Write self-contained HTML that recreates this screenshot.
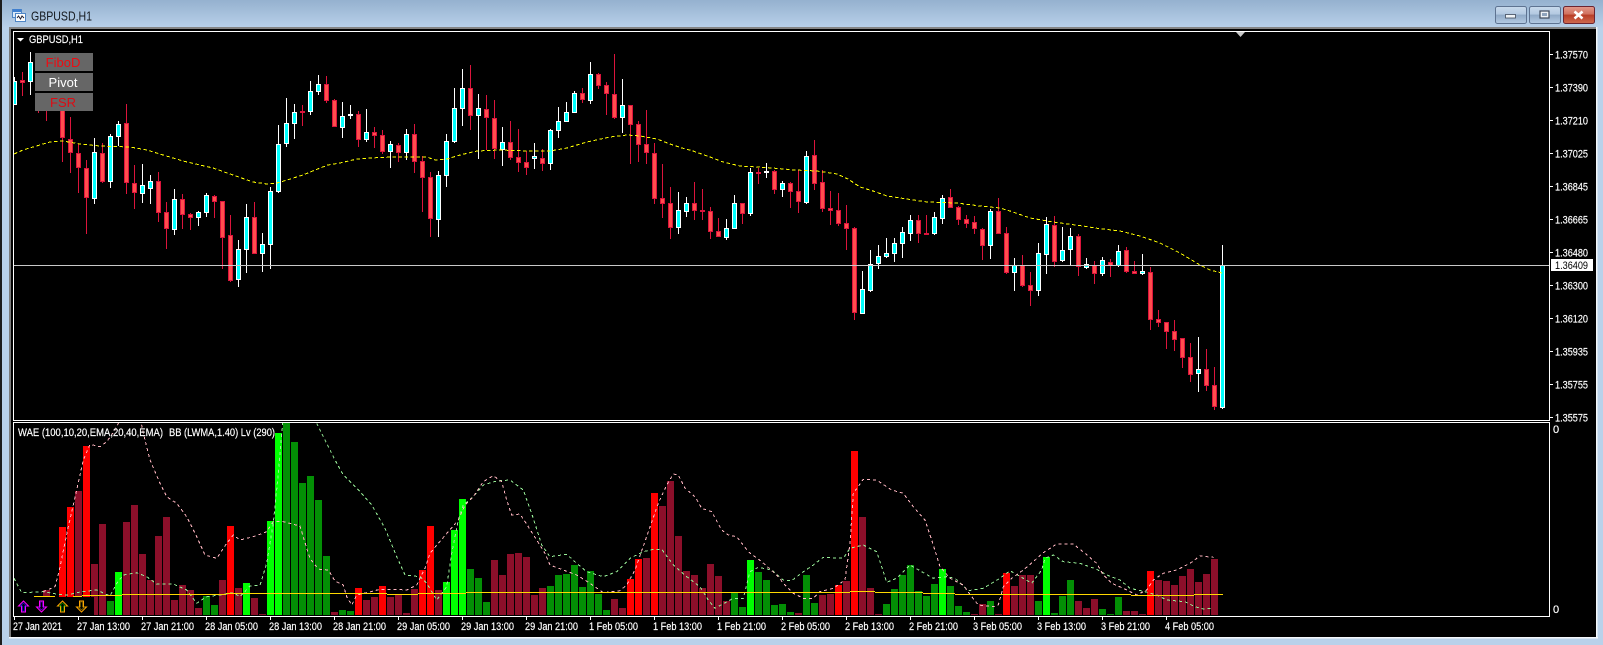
<!DOCTYPE html>
<html><head><meta charset="utf-8"><title>GBPUSD,H1</title>
<style>
html,body{margin:0;padding:0;background:#b9d1ea;width:1603px;height:645px;overflow:hidden}
svg{display:block;position:absolute;left:0;top:0}
text{font-family:"Liberation Sans",sans-serif;font-size:11px;fill:#fff}
.ax text{stroke:#fff;stroke-width:.18}
</style></head><body>
<svg id="s" width="1603" height="645" viewBox="0 0 1603 645" xmlns="http://www.w3.org/2000/svg">
<defs>
<linearGradient id="tb" x1="0" y1="0" x2="0" y2="1"><stop offset="0" stop-color="#95b1cf"/><stop offset="1" stop-color="#b9d1ea"/></linearGradient>
<linearGradient id="bb" x1="0" y1="0" x2="0" y2="1"><stop offset="0" stop-color="#c9daed"/><stop offset=".45" stop-color="#b3c9e1"/><stop offset=".5" stop-color="#8fa9c7"/><stop offset="1" stop-color="#b5cbe3"/></linearGradient>
<linearGradient id="bc" x1="0" y1="0" x2="0" y2="1"><stop offset="0" stop-color="#e39a8c"/><stop offset=".45" stop-color="#d0705e"/><stop offset=".5" stop-color="#b83d26"/><stop offset="1" stop-color="#cf6a50"/></linearGradient>
<clipPath id="c1"><rect x="14" y="32" width="1535" height="388"/></clipPath>
<clipPath id="c2"><rect x="14" y="423" width="1535" height="192.5"/></clipPath>
</defs>
<rect width="1603" height="645" fill="#b9d1ea"/>
<rect width="1603" height="28" fill="url(#tb)"/>
<rect x="0" y="0" width="2" height="645" fill="#1c1c1c"/>
<rect x="2" y="28" width="7" height="617" fill="#b9d1ea"/>
<rect x="9" y="27" width="3" height="610" fill="#7a7a7a"/>
<rect x="9" y="27" width="1587" height="2" fill="#858585"/>
<rect x="11" y="29" width="1585" height="608" fill="#000"/>
<rect x="9" y="637" width="1589" height="1.5" fill="#f4f7fb"/>
<rect x="1596" y="27" width="1.5" height="611" fill="#f4f7fb"/>

<!-- window icon -->
<g shape-rendering="crispEdges">
<rect x="12.500" y="9.500" width="9" height="8" fill="#dbe9f7" stroke="#4f86c6"/>
<rect x="13" y="9" width="8" height="3" fill="#3f7fcf"/>
<rect x="15.500" y="13.500" width="10" height="8" fill="#fff" stroke="#4f86c6"/>
</g>
<path d="M17 18l1.500-2 2 3 1.500-3 2 2" fill="none" stroke="#223" stroke-width="1"/>
<text x="31" y="20.500" textLength="61" lengthAdjust="spacingAndGlyphs" style="font-size:13px;fill:#14191f">GBPUSD,H1</text>

<!-- caption buttons -->
<rect x="1495.500" y="6.500" width="31" height="17" rx="2" fill="url(#bb)" stroke="#5e7391"/>
<rect x="1505.500" y="14.500" width="10" height="3.500" fill="#eef2f6" stroke="#3f4a5c" stroke-width=".8"/>
<rect x="1529.500" y="6.500" width="31" height="17" rx="2" fill="url(#bb)" stroke="#5e7391"/>
<rect x="1540" y="11" width="9" height="7" fill="#eef2f6" stroke="#3f4a5c" stroke-width="1.200"/>
<rect x="1542" y="13" width="5" height="3" fill="#8fa4bd"/>
<rect x="1563.500" y="6.500" width="31" height="17" rx="2" fill="url(#bc)" stroke="#6c2430"/>
<path d="M1574.500 11.500l8 7M1582.500 11.500l-8 7" stroke="#fff" stroke-width="2.600" fill="none"/>

<!-- frames -->
<g fill="none" stroke="#fff" shape-rendering="crispEdges">
<rect x="13.500" y="31.500" width="1536" height="389"/>
<rect x="13.500" y="422.500" width="1536" height="194"/>
</g>
<path d="M1236 32h9l-4.500 5z" fill="#c8c8c8"/>

<g id="main" clip-path="url(#c1)"></g>
<g id="ind" clip-path="url(#c2)"></g>

<!-- arrow panel -->
<rect x="14" y="597" width="80" height="18.500" fill="#000"/>
<g fill="none" stroke-width="1">
<path d="M23.500 601l-5 5h3v6h4v-6h3z" stroke="#ff00ff"/><path d="M23.500 603l-3 3h2v5h2v-5h2z" stroke="#2020ff" stroke-width=".6"/>
<path d="M41.500 612l-5-5h3v-6h4v6h3z" stroke="#ff00ff"/><path d="M41.500 610l-3-3h2v-5h2v5h2z" stroke="#8000ff" stroke-width=".6"/>
<path d="M62.500 601l-5 5h3v6h4v-6h3z" stroke="#ffa500"/><path d="M62.500 603l-3 3h2v5h2v-5h2z" stroke="#00a000" stroke-width=".6"/>
<path d="M81.500 612l-5-5h3v-6h4v6h3z" stroke="#ffa500"/><path d="M81.500 610l-3-3h2v-5h2v5h2z" stroke="#a08000" stroke-width=".6"/>
</g>

<!-- buttons -->
<rect x="35" y="53" width="58" height="58" fill="#000"/>
<rect x="35" y="53" width="58" height="18" fill="#666"/>
<rect x="35" y="73" width="58" height="18" fill="#666"/>
<rect x="35" y="93" width="58" height="18" fill="#666"/>
<text x="63" y="67" text-anchor="middle" style="font-size:13px;fill:#ee0b12">FiboD</text>
<text x="63" y="87" text-anchor="middle" style="font-size:13px;fill:#fff">Pivot</text>
<text x="63" y="107" text-anchor="middle" style="font-size:13px;fill:#dc0c14">FSR</text>

<!-- chart labels -->
<path d="M17 38h7l-3.500 3.500z" fill="#fff"/>
<g class="ax">
<text x="29" y="43" textLength="54" lengthAdjust="spacingAndGlyphs">GBPUSD,H1</text>
<text x="18" y="436" textLength="145" lengthAdjust="spacingAndGlyphs">WAE (100,10,20,EMA,20,40,EMA)</text>
<text x="169" y="436" textLength="106" lengthAdjust="spacingAndGlyphs">BB (LWMA,1.40) Lv (290)</text>
</g>

<!-- price axis -->
<g fill="#fff" shape-rendering="crispEdges">
<rect x="1550" y="54" width="3" height="1"/><rect x="1550" y="87" width="3" height="1"/><rect x="1550" y="120" width="3" height="1"/><rect x="1550" y="153" width="3" height="1"/><rect x="1550" y="186" width="3" height="1"/><rect x="1550" y="219" width="3" height="1"/><rect x="1550" y="252" width="3" height="1"/><rect x="1550" y="285" width="3" height="1"/><rect x="1550" y="318" width="3" height="1"/><rect x="1550" y="351" width="3" height="1"/><rect x="1550" y="384" width="3" height="1"/><rect x="1550" y="417" width="3" height="1"/>
</g>
<g class="ax">
<text x="1555" y="58.500" textLength="33" lengthAdjust="spacingAndGlyphs">1.37570</text>
<text x="1555" y="91.500" textLength="33" lengthAdjust="spacingAndGlyphs">1.37390</text>
<text x="1555" y="124.500" textLength="33" lengthAdjust="spacingAndGlyphs">1.37210</text>
<text x="1555" y="157.500" textLength="33" lengthAdjust="spacingAndGlyphs">1.37025</text>
<text x="1555" y="190.500" textLength="33" lengthAdjust="spacingAndGlyphs">1.36845</text>
<text x="1555" y="223.500" textLength="33" lengthAdjust="spacingAndGlyphs">1.36665</text>
<text x="1555" y="256.500" textLength="33" lengthAdjust="spacingAndGlyphs">1.36480</text>
<text x="1555" y="289.500" textLength="33" lengthAdjust="spacingAndGlyphs">1.36300</text>
<text x="1555" y="322.500" textLength="33" lengthAdjust="spacingAndGlyphs">1.36120</text>
<text x="1555" y="355.500" textLength="33" lengthAdjust="spacingAndGlyphs">1.35935</text>
<text x="1555" y="388.500" textLength="33" lengthAdjust="spacingAndGlyphs">1.35755</text>
<text x="1555" y="421.500" textLength="33" lengthAdjust="spacingAndGlyphs">1.35575</text>
<rect x="1551" y="259" width="42" height="12" fill="#fff"/>
<text x="1555" y="269" textLength="33" lengthAdjust="spacingAndGlyphs" style="fill:#000;stroke:none">1.36409</text>
<text x="1553" y="433">0</text>
<text x="1553" y="613">0</text>
</g>

<!-- time axis -->
<g class="ax">
<text x="13" y="630" textLength="49" lengthAdjust="spacingAndGlyphs">27 Jan 2021</text>
<text x="77" y="630" textLength="53" lengthAdjust="spacingAndGlyphs">27 Jan 13:00</text>
<text x="141" y="630" textLength="53" lengthAdjust="spacingAndGlyphs">27 Jan 21:00</text>
<text x="205" y="630" textLength="53" lengthAdjust="spacingAndGlyphs">28 Jan 05:00</text>
<text x="269" y="630" textLength="53" lengthAdjust="spacingAndGlyphs">28 Jan 13:00</text>
<text x="333" y="630" textLength="53" lengthAdjust="spacingAndGlyphs">28 Jan 21:00</text>
<text x="397" y="630" textLength="53" lengthAdjust="spacingAndGlyphs">29 Jan 05:00</text>
<text x="461" y="630" textLength="53" lengthAdjust="spacingAndGlyphs">29 Jan 13:00</text>
<text x="525" y="630" textLength="53" lengthAdjust="spacingAndGlyphs">29 Jan 21:00</text>
<text x="589" y="630" textLength="49" lengthAdjust="spacingAndGlyphs">1 Feb 05:00</text>
<text x="653" y="630" textLength="49" lengthAdjust="spacingAndGlyphs">1 Feb 13:00</text>
<text x="717" y="630" textLength="49" lengthAdjust="spacingAndGlyphs">1 Feb 21:00</text>
<text x="781" y="630" textLength="49" lengthAdjust="spacingAndGlyphs">2 Feb 05:00</text>
<text x="845" y="630" textLength="49" lengthAdjust="spacingAndGlyphs">2 Feb 13:00</text>
<text x="909" y="630" textLength="49" lengthAdjust="spacingAndGlyphs">2 Feb 21:00</text>
<text x="973" y="630" textLength="49" lengthAdjust="spacingAndGlyphs">3 Feb 05:00</text>
<text x="1037" y="630" textLength="49" lengthAdjust="spacingAndGlyphs">3 Feb 13:00</text>
<text x="1101" y="630" textLength="49" lengthAdjust="spacingAndGlyphs">3 Feb 21:00</text>
<text x="1165" y="630" textLength="49" lengthAdjust="spacingAndGlyphs">4 Feb 05:00</text>
</g>
<g id="ticks" fill="#fff" shape-rendering="crispEdges"></g>
</svg>
<script>
(function(){
var NS="http://www.w3.org/2000/svg";
function el(p,n,a){var e=document.createElementNS(NS,n);for(var k in a)e.setAttribute(k,a[k]);p.appendChild(e);return e;}
var C=[[1,77,81,105,105],[0,72,80,83,96],[1,52,62,82,95],[0,60,70,90,113],[0,60,70,90,121],[0,70,75,85,100],[0,90,100,138,162],[0,117,139,153,173],[0,144,153,168,193],[0,160,168,198,234],[1,138,152,199,204],[0,143,153,182,183],[1,134,136,182,188],[1,121,124,137,146],[0,104,123,183,194],[0,165,183,193,209],[1,164,185,194,203],[1,175,181,189,204],[0,172,181,213,222],[0,202,212,229,249],[1,189,199,230,235],[0,194,199,215,229],[0,213,214,218,230],[1,211,212,218,226],[1,193,195,213,217],[0,195,196,202,218],[0,201,201,238,269],[0,215,235,281,282],[1,240,249,280,287],[1,204,217,250,273],[0,202,217,254,254],[1,233,244,254,272],[1,187,191,245,269],[1,125,144,192,193],[1,98,123,144,147],[1,104,112,124,139],
[0,105,111,113,126],[1,81,91,112,115],[1,75,84,92,95],[0,76,84,101,103],[0,99,100,127,127],[1,102,116,128,138],[1,105,114,116,119],[0,111,114,140,147],[1,109,132,140,142],[0,127,132,136,148],[0,130,135,152,154],[1,141,144,152,168],[0,143,145,153,162],[1,129,134,153,160],[0,124,134,162,173],[0,156,161,178,212],[0,172,177,219,237],[1,171,175,220,237],[1,134,141,176,187],[1,88,108,142,143],[1,69,88,109,126],[0,65,88,116,130],[1,94,108,116,159],[0,95,109,118,150],[0,100,118,149,159],[1,127,142,150,166],[0,121,142,158,160],[0,129,157,163,172],[0,151,162,168,175],[1,143,156,159,169],[0,149,158,164,171],[1,129,130,164,170],[1,107,121,131,138],[1,102,112,122,122],[1,91,93,113,113],[0,88,93,100,103],[1,62,74,101,104],[0,73,74,86,89],[0,82,85,94,115],[0,54,94,118,119],[1,79,105,118,133],[0,105,105,125,164],[0,121,124,145,162],[0,110,144,153,164],
[0,143,153,199,204],[0,164,198,204,218],[0,187,203,228,239],[1,192,210,228,234],[1,197,203,212,217],[0,182,203,211,220],[0,189,210,212,220],[0,207,211,232,239],[0,218,231,237,237],[1,219,228,238,240],[1,195,203,229,229],[0,203,203,214,224],[1,168,172,214,216],[0,168,172,173,184],[1,163,171,173,178],[0,170,171,190,194],[1,181,183,190,197],[0,182,183,192,208],[0,170,191,202,213],[1,151,156,203,204],[0,140,155,184,190],[0,170,182,209,212],[0,191,208,211,225],[0,193,210,224,226],[0,205,223,229,250],[0,227,228,313,320],[1,271,289,314,314],[1,250,264,291,292],[1,245,256,264,269],[1,238,253,257,258],[1,238,243,254,262],[1,227,232,244,258],[1,215,220,234,241],[0,215,220,234,243],[0,215,233,235,235],[1,212,217,234,235],[1,195,198,219,224],[0,189,197,208,208],[0,206,207,220,225],[0,215,219,224,228],[0,216,222,229,234],[0,228,229,246,260],
[1,209,211,246,259],[0,198,211,234,234],[0,227,233,273,274],[1,258,265,273,291],[0,255,265,286,287],[0,272,285,291,306],[1,243,253,291,296],[1,217,224,255,274],[0,216,225,262,267],[1,227,250,261,262],[1,228,236,250,265],[0,234,236,267,276],[1,258,264,268,269],[0,261,265,274,284],[1,257,260,274,276],[0,259,262,266,277],[1,245,251,266,267],[0,247,250,272,273],[0,261,271,274,274],[1,254,271,274,275],[0,267,272,320,330],[0,310,319,323,327],[0,322,322,332,349],[0,320,331,340,351],[0,338,338,358,368],[0,343,357,375,382],[1,337,369,374,392],[0,349,369,386,391],[0,367,385,407,410],[1,245,265,408,409]];
var m=document.getElementById("main");
var ma="14,154 23,150 33,147 50,142 63,141 80,144 100,146 130,147 147,150 163,155 183,161 200,165 213,168 233,175 253,182 267,184 277,183 287,180 303,175 315,170 328,165 340,163 357,159 370,158 393,157 427,157 435,160 447,159 460,155 477,151 500,150 527,151 550,151 567,148 587,142 610,137 627,135 640,136 657,139 670,144 682,148 693,151 710,157 723,162 740,166 757,167 772,168 795,170 817,171 837,174 848,179 860,187 873,191 887,196 907,199 927,202 957,203 980,206 1000,208 1010,211 1030,218 1053,222 1083,226 1095,228 1120,231 1140,236 1160,243 1180,253 1200,265 1210,270 1222,273";
C.forEach(function(c,i){var x=14.5+8*i;var col=c[0]?"#fff":"#dc143c";
 el(m,"rect",{x:x-.5,y:c[1],width:1,height:c[4]-c[1],fill:col,"shape-rendering":"crispEdges"});
 el(m,"rect",{x:x-2,y:c[2]+.5,width:4,height:Math.max(c[3]-c[2]-1,1),fill:c[0]?"#00ffff":"#ff4d4d",stroke:col,"stroke-width":1,"shape-rendering":"crispEdges"});
});
el(m,"polyline",{points:ma,fill:"none",stroke:"#ffff00","stroke-width":1,"stroke-dasharray":"3.5 2.5","shape-rendering":"crispEdges"});
el(m,"rect",{x:14,y:265,width:1535,height:1,fill:"#c8c8c8","shape-rendering":"crispEdges"});
// bars
var B={4:"d590",6:"r527",7:"r507",8:"d491",9:"r446",10:"d564",11:"d524",12:"g601",13:"l572",14:"d522",15:"d505",16:"d554",17:"d580",18:"d536",19:"d517",20:"d600",21:"d585",22:"d590",23:"d608",24:"g596",25:"g605",26:"d580",27:"r526",28:"d588",29:"l583",30:"d598",31:"d614",32:"l521",33:"l433",34:"g423",35:"g442",36:"g483",37:"g476",38:"g500",39:"g556",40:"d612",41:"g610",42:"g611",43:"r588",44:"d600",45:"d597",46:"r586",47:"d597",48:"d595",49:"d613",50:"d589",51:"r570",52:"r526",53:"d590",54:"l582",55:"l530",56:"l499",57:"g569",58:"g578",59:"g602",60:"d560",61:"d575",62:"d554",63:"d553",64:"d557",65:"d595",66:"d588",67:"g586",68:"g575",69:"g574",70:"g565",71:"g587",72:"g571",73:"g594",74:"g610",75:"d599",76:"d608",77:"r579",78:"r559",79:"d558",80:"r493",81:"d506",82:"d481",83:"d536",84:"d571",85:"d575",86:"d588",87:"d564",88:"d576",89:"d601",90:"g593",91:"g607",92:"l560",93:"g572",94:"g580",95:"g605",96:"g604",97:"g612",98:"d613",99:"g575",100:"g603",101:"d595",102:"d594",103:"r585",104:"d581",105:"r451",106:"d517",107:"d588",108:"d614",109:"g604",110:"g589",111:"g575",112:"g565",113:"g591",114:"g596",115:"g584",116:"l569",117:"g586",118:"g606",119:"g612",120:"d614",121:"d604",122:"g601",123:"d614",124:"r573",125:"d586",126:"d575",127:"d575",128:"g601",129:"l557",130:"g613",131:"g596",132:"g580",133:"d601",134:"d608",135:"d599",136:"g609",137:"g614",138:"g597",139:"d611",140:"d611",141:"d614",142:"r571",143:"d580",144:"d581",145:"d585",146:"d576",147:"d569",148:"d582",149:"d574",150:"d559"};
var COL={r:"#ff0000",d:"#8c0f2a",g:"#038f05",l:"#00ff00"};
var n=document.getElementById("ind");
for(var k in B){var i=+k,t=+B[k].slice(1);el(n,"rect",{x:11+8*i,y:t,width:7,height:615-t,fill:COL[B[k][0]],"shape-rendering":"crispEdges"});}
function z(x0,y0,a){return a.map(function(p){return (x0+p[0]/3).toFixed(1)+","+(y0+p[1]/3).toFixed(1);});}
var P=z(0,400,[[130,575],[165,560],[177,515],[205,380],[230,270],[250,180],[270,133],[300,140],[320,125],[345,90],[365,50],[420,50],[430,100],[450,180],[480,250],[500,290],[530,310],[560,350],[590,410],[615,465],[650,475],[680,430],[700,405],[720,420],[760,410],[800,395],[820,365],[850,365],[900,378],[925,460]])
.concat(z(310,440,[[0,355],[15,375],[30,388],[55,390],[75,423],[100,435],[110,470],[125,495],[140,465],[170,458],[210,448],[250,448],[290,450],[320,435],[345,385],[360,340],[385,310],[415,275],[445,240],[465,195],[490,170],[520,125],[550,107],[575,125],[590,180],[605,225],[630,222],[655,260],[680,300],[705,340],[720,375],[760,390],[800,405],[840,430],[880,458],[930,452],[950,435],[975,390]]))
.concat(z(650,430,[[25,220],[50,165],[70,132],[85,135],[105,175],[135,200],[155,235],[185,245],[215,300],[235,315],[260,320],[295,365],[335,395],[380,435],[405,465],[430,490],[460,505],[490,505],[510,485],[550,475],[585,450],[600,340],[610,190],[640,148],[680,150],[725,180],[760,190],[790,230],[825,270],[845,330],[870,410],[900,445],[940,465],[965,500],[985,525]]))
.concat(z(990,500,[[10,320],[25,315],[40,260],[65,235],[100,210],[130,185],[160,158],[200,132],[250,132],[285,160],[320,190],[340,225],[365,250],[400,265],[440,285],[470,270],[490,240],[520,220],[560,210],[600,190],[630,168],[670,172]]));
var G=z(0,400,[[42,535],[65,578],[130,575],[175,583],[200,585],[245,575],[290,570],[330,588],[350,550],[370,525],[410,518],[440,530],[470,552],[520,552],[560,570],[590,610],[620,590],[660,585],[700,578],[720,590],[750,558],[780,556],[800,490],[820,370],[835,220],[850,50],[860,30],[930,30],[960,90]])
.concat(z(310,440,[[45,0],[75,60],[100,105],[150,155],[185,195],[225,265],[260,350],[285,405],[330,410],[350,430],[380,480],[410,440],[425,340],[445,240],[460,195],[490,170],[520,135],[560,123],[600,120],[640,150],[670,235],[695,315],[720,350],[770,343],[800,370],[830,395],[880,410],[920,395],[960,355],[1000,335]]))
.concat(z(650,430,[[10,358],[35,358],[70,405],[110,440],[150,470],[175,510],[195,535],[250,505],[280,505],[300,425],[325,412],[365,420],[400,450],[425,452],[460,425],[490,405],[520,382],[580,385],[600,355],[640,345],[680,365],[695,410],[710,457],[740,445],[780,405],[815,425],[850,445],[890,440],[915,445],[955,482],[1000,475]]))
.concat(z(990,500,[[30,235],[60,212],[100,235],[125,250],[155,210],[165,175],[190,165],[220,185],[270,190],[320,208],[350,225],[390,240],[420,265],[465,275],[500,285],[530,300],[585,305],[615,320],[640,327],[670,325]]));
el(n,"polyline",{points:G.join(" "),fill:"none",stroke:"#98f098","stroke-width":1,"stroke-dasharray":"3 3","shape-rendering":"crispEdges"});
el(n,"polyline",{points:P.join(" "),fill:"none",stroke:"#ffb6c1","stroke-width":1,"stroke-dasharray":"3 3","shape-rendering":"crispEdges"});
var Y=[[34,55,596],[73,82,596],[82,122,595],[122,226,594],[226,387,593],[387,418,594],[418,466,593],[466,850,592],[850,875,591],[875,923,592],[923,955,593],[955,1131,594],[1131,1194,595],[1194,1223,594]];
Y.forEach(function(s){el(n,"rect",{x:s[0],y:s[2],width:s[1]-s[0],height:1,fill:"#ffd800","shape-rendering":"crispEdges"});});
var t=document.getElementById("ticks");
for(var j=0;j<19;j++)el(t,"rect",{x:14+64*j,y:617,width:1,height:3});
})();
</script>
</body></html>
